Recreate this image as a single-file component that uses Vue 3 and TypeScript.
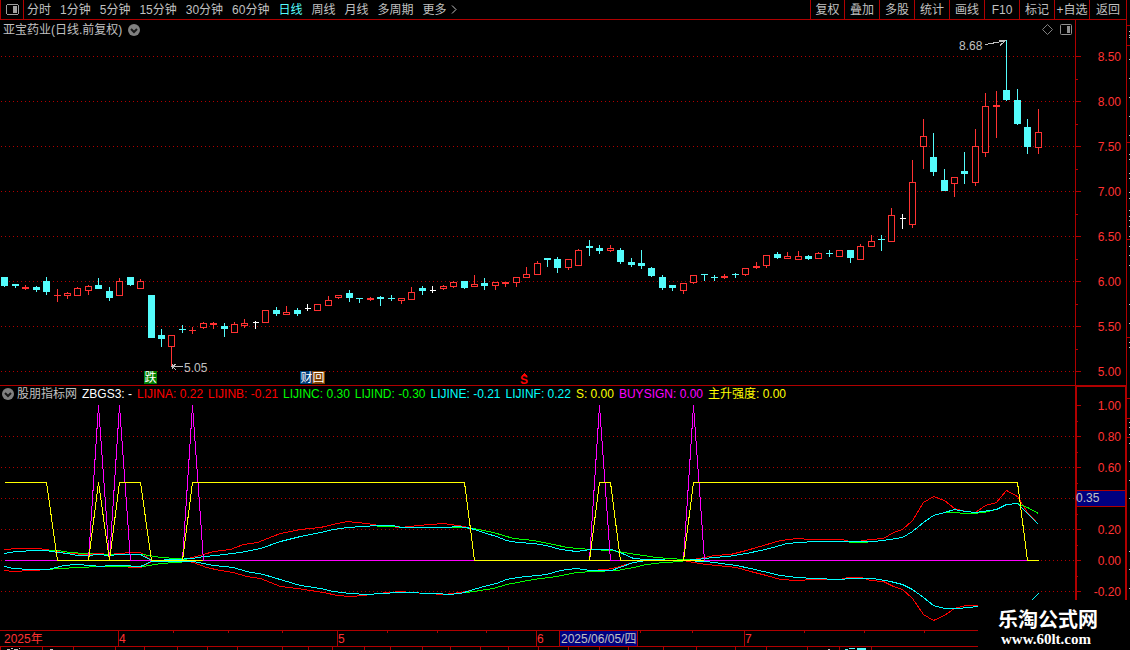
<script setup lang="ts">
type Kind = 'up' | 'down' | 'fill' | 'flat'
type Candle = [kind: string, high: number, top: number, bottom: number, low: number]
type Point = [number, number]

const periods = ['分时', '1分钟', '5分钟', '15分钟', '30分钟', '60分钟', '日线', '周线', '月线', '多周期']
const activePeriod = '日线'
const actions = ['复权', '叠加', '多股', '统计', '画线', 'F10', '标记', '+自选', '返回']

const chartWidth = 1075
const left = (x: number) => ({ left: (x / chartWidth) * 100 + '%' })
const slotX = (i: number) => Math.floor(4.94 + i * 10.435)

const kinds: Record<string, Kind> = { u: 'up', d: 'down', f: 'fill', w: 'flat' }
const candles: Candle[] = [
  ['d', 277, 277, 286, 287], ['d', 284, 284, 286, 288], ['f', 285, 287, 289, 290], ['d', 286, 287, 290, 292],
  ['d', 277, 281, 292, 295], ['f', 289, 295, 296, 302], ['u', 292, 293, 296, 299], ['u', 287, 288, 296, 296],
  ['u', 285, 286, 291, 295], ['d', 278, 285, 289, 289], ['d', 287, 291, 298, 301], ['u', 278, 281, 296, 296],
  ['d', 277, 277, 285, 286], ['u', 279, 281, 289, 289], ['d', 295, 295, 338, 338], ['d', 329, 335, 339, 347],
  ['u', 335, 335, 347, 366], ['d', 325, 329, 330, 333], ['f', 327, 330, 331, 334], ['u', 322, 323, 328, 329],
  ['f', 322, 323, 325, 329], ['d', 323, 326, 329, 337], ['u', 322, 324, 333, 333], ['u', 319, 323, 326, 328],
  ['w', 321, 322, 323, 329], ['u', 310, 310, 323, 323], ['d', 307, 310, 314, 316], ['u', 306, 312, 315, 315],
  ['d', 308, 310, 314, 316], ['w', 304, 308, 309, 311], ['u', 304, 304, 311, 311], ['u', 296, 300, 306, 306],
  ['u', 295, 295, 298, 299], ['d', 290, 293, 298, 302], ['d', 298, 298, 299, 303], ['f', 297, 298, 300, 301],
  ['d', 296, 297, 299, 306], ['d', 295, 298, 299, 301], ['u', 298, 298, 301, 304], ['u', 287, 292, 300, 300],
  ['d', 286, 288, 291, 295], ['w', 286, 290, 291, 293], ['u', 285, 286, 289, 290], ['u', 281, 282, 287, 288],
  ['d', 281, 281, 288, 289], ['u', 275, 284, 287, 287], ['d', 278, 283, 286, 290], ['u', 282, 282, 286, 290],
  ['f', 282, 282, 284, 287], ['u', 277, 277, 283, 287], ['u', 267, 274, 278, 278], ['u', 261, 263, 275, 275],
  ['d', 258, 258, 260, 267], ['d', 257, 259, 268, 273], ['u', 259, 259, 268, 270], ['u', 249, 250, 266, 266],
  ['d', 240, 246, 248, 256], ['d', 245, 248, 251, 254], ['u', 245, 248, 251, 252], ['d', 248, 250, 262, 264],
  ['d', 258, 262, 265, 267], ['d', 250, 263, 266, 269], ['d', 267, 268, 276, 277], ['d', 275, 277, 288, 290],
  ['d', 285, 285, 288, 291], ['u', 283, 283, 291, 294], ['u', 275, 275, 283, 284], ['d', 274, 274, 275, 281],
  ['d', 275, 277, 278, 281], ['f', 274, 276, 278, 279], ['d', 273, 274, 275, 278], ['u', 268, 268, 275, 276],
  ['f', 262, 266, 268, 269], ['u', 255, 255, 266, 268], ['d', 252, 254, 258, 259], ['u', 252, 256, 259, 259],
  ['u', 251, 256, 260, 260], ['d', 255, 256, 259, 260], ['u', 252, 253, 259, 259], ['d', 250, 253, 254, 257],
  ['u', 250, 250, 257, 257], ['d', 250, 250, 258, 263], ['u', 244, 246, 260, 260], ['u', 235, 241, 247, 247],
  ['d', 235, 239, 240, 251], ['u', 208, 215, 242, 242], ['w', 214, 218, 219, 229], ['u', 160, 182, 225, 228],
  ['u', 119, 136, 147, 169], ['d', 133, 157, 172, 176], ['d', 169, 180, 191, 191], ['u', 177, 177, 184, 197],
  ['d', 152, 171, 174, 184], ['u', 129, 146, 183, 186], ['u', 93, 106, 153, 157], ['f', 91, 105, 107, 138],
  ['d', 40, 90, 100, 101], ['d', 89, 100, 124, 125], ['d', 119, 127, 147, 154], ['u', 109, 132, 148, 154]
]
const bars = candles.map(([k, high, top, bottom, low], i) => ({
  x: slotX(i), kind: kinds[k], high, top, bottom, low
}))

const priceTicks = [8.5, 8, 7.5, 7, 6.5, 6, 5.5, 5].map((v, i) => ({ label: v.toFixed(2), y: 56 + i * 45 }))
const subTicks = [1, 0.8, 0.6, 0.4, 0.2, 0, -0.2].map((v, i) => ({ label: v.toFixed(2), y: 405 + i * 31 }))

const readings = [
  { text: 'ZBGS3: -', tone: 'white' },
  { text: 'LIJINA: 0.22', tone: 'red' },
  { text: 'LIJINB: -0.21', tone: 'red' },
  { text: 'LIJINC: 0.30', tone: 'green' },
  { text: 'LIJIND: -0.30', tone: 'green' },
  { text: 'LIJINE: -0.21', tone: 'cyan' },
  { text: 'LIJINF: 0.22', tone: 'cyan' },
  { text: 'S: 0.00', tone: 'yellow' },
  { text: 'BUYSIGN: 0.00', tone: 'magenta' },
  { text: '主升强度: 0.00', tone: 'yellow' }
]

const path = (pts: Point[]) => pts.map(([x, y]) => `${x + 0.5},${y + 0.5}`).join(' ')
const bySlot = (level: (i: number) => number): Point[] => bars.map((b, i) => [b.x, level(i)])

const buyDays = [9, 11, 18, 57, 66]
const strong = (i: number) =>
  i <= 4 || i === 9 || (i >= 11 && i <= 13) || (i >= 18 && i <= 44) || i === 57 || i === 58 || (i >= 66 && i <= 97)

const lines: { tone: string; pts: Point[] }[] = [
  { tone: 'red', pts: [[4, 549], [18, 548], [36, 548], [46, 549], [57, 551], [67, 553], [88, 554], [98, 553], [109, 554], [119, 553], [130, 552], [140, 552], [151, 560], [182, 559], [192, 557], [203, 554], [213, 551], [230, 549], [243, 544], [257, 542], [267, 538], [280, 533], [290, 531], [300, 529], [320, 527], [337, 523], [347, 521], [355, 522], [367, 523], [378, 525], [400, 527], [418, 525], [430, 524], [443, 523], [450, 524], [464, 526], [474, 529], [486, 533], [496, 536], [506, 540], [517, 542], [533, 543], [546, 545], [560, 549], [576, 551], [590, 549], [611, 549], [622, 553], [633, 558], [646, 559], [683, 560], [693, 559], [704, 557], [714, 555], [730, 554], [746, 550], [763, 545], [780, 540], [797, 538], [810, 539], [841, 539], [850, 541], [857, 541], [870, 539], [883, 538], [893, 532], [902, 529], [912, 520], [923, 502], [933, 496], [944, 500], [954, 508], [965, 511], [975, 512], [985, 505], [996, 502], [1006, 490], [1017, 496], [1027, 512], [1038, 524]] },
  { tone: 'red', pts: [[4, 570], [13, 571], [30, 570], [50, 569], [63, 565], [77, 564], [90, 565], [100, 566], [110, 565], [120, 565], [130, 567], [140, 567], [151, 561], [182, 560], [193, 562], [206, 567], [220, 570], [233, 572], [246, 576], [260, 578], [280, 586], [297, 588], [310, 590], [323, 592], [337, 595], [350, 596], [363, 595], [377, 593], [400, 591], [410, 592], [427, 593], [443, 594], [460, 592], [470, 590], [483, 586], [496, 583], [506, 579], [517, 577], [546, 574], [560, 570], [576, 568], [590, 570], [606, 569], [616, 567], [622, 565], [633, 562], [646, 560], [683, 560], [693, 562], [706, 564], [736, 567], [750, 571], [766, 575], [780, 579], [797, 580], [813, 579], [840, 579], [847, 577], [861, 577], [870, 580], [883, 581], [893, 586], [902, 589], [912, 598], [923, 614], [933, 620], [944, 615], [954, 608], [965, 605], [978, 605]] },
  { tone: 'green', pts: [[46, 550], [57, 550], [70, 552], [100, 554], [143, 554], [160, 557], [176, 558], [187, 559]] },
  { tone: 'green', pts: [[46, 569], [60, 568], [77, 567], [100, 566], [130, 566], [143, 566], [160, 563], [176, 562], [187, 561]] },
  { tone: 'green', pts: [[376, 526], [393, 526], [405, 527], [417, 527], [450, 527], [460, 527], [473, 528], [493, 532], [513, 538], [533, 540], [553, 544], [567, 547], [590, 549], [611, 550], [636, 554], [656, 557], [683, 559], [693, 559]] },
  { tone: 'green', pts: [[466, 592], [473, 591], [493, 588], [506, 584], [533, 579], [556, 576], [576, 572], [593, 571], [617, 570], [633, 567], [646, 564], [663, 562], [683, 561]] },
  { tone: 'green', pts: [[848, 542], [865, 542], [870, 541]] },
  { tone: 'green', pts: [[946, 512], [973, 513], [983, 512], [996, 509], [1006, 504], [1017, 503], [1027, 507], [1038, 513]] },
  { tone: 'cyan', pts: [[4, 553], [15, 551], [36, 550], [46, 550], [57, 552], [67, 553], [77, 555], [88, 555], [98, 554], [109, 555], [119, 554], [140, 554], [151, 560], [176, 559], [192, 558], [203, 556], [216, 555], [240, 552], [260, 548], [280, 541], [300, 536], [320, 532], [333, 529], [347, 527], [363, 526], [376, 525], [393, 525], [400, 527], [446, 527], [457, 526], [466, 527], [474, 529], [486, 533], [496, 536], [506, 540], [517, 542], [533, 543], [546, 545], [560, 549], [576, 551], [590, 549], [611, 549], [622, 553], [633, 558], [646, 559], [683, 560], [697, 559], [713, 557], [727, 556], [746, 553], [760, 550], [773, 547], [786, 543], [813, 541], [873, 541], [890, 539], [902, 537], [912, 531], [923, 522], [933, 515], [944, 512], [954, 509], [965, 511], [975, 512], [996, 509], [1006, 504], [1017, 503], [1027, 513], [1038, 524]] },
  { tone: 'cyan', pts: [[4, 566], [13, 568], [30, 569], [48, 569], [63, 565], [77, 564], [90, 565], [100, 566], [110, 565], [120, 565], [140, 566], [151, 561], [193, 561], [203, 563], [213, 565], [233, 567], [246, 571], [263, 574], [283, 580], [300, 585], [320, 588], [333, 591], [350, 593], [367, 594], [380, 593], [400, 592], [437, 593], [447, 594], [460, 593], [470, 590], [483, 586], [496, 583], [506, 579], [517, 577], [546, 574], [560, 570], [576, 568], [590, 570], [611, 570], [622, 566], [633, 562], [646, 560], [683, 560], [706, 561], [736, 565], [750, 568], [763, 571], [780, 575], [797, 577], [813, 578], [840, 579], [850, 578], [873, 578], [890, 581], [902, 584], [912, 589], [923, 597], [933, 605], [944, 608], [957, 608], [978, 606], [1006, 608], [1031, 600], [1038, 593]] },
  { tone: 'yellow', pts: bySlot(() => 560) },
  { tone: 'magenta', pts: bySlot((i) => (buyDays.includes(i) ? 405 : 560)) },
  { tone: 'yellow', pts: bySlot((i) => (strong(i) ? 482 : 560)) }
]

const months = [{ x: 118, label: '4' }, { x: 337, label: '5' }, { x: 536, label: '6' }, { x: 744, label: '7' }]
const weekTicks = [173, 228, 282, 387, 437, 486, 640, 692, 804, 864, 924]
const cells = [0, 42, 73, 115, 144, 177, 207, 237, 282, 308, 332, 364, 390, 422, 450, 480, 508, 538, 568, 599, 628, 663, 696, 735, 766, 807, 839, 871]
const edgeRules = [25, 45, 142, 239, 337, 398, 418, 437]
const edgeDots = [31, 35, 37, 59, 78, 97, 116, 135, 154, 159, 173, 178, 192, 198, 210, 216, 220, 226, 236, 246, 255, 265, 304, 323, 342, 347, 422, 427, 434, 443, 461, 480, 498, 551, 569, 588]
</script>

<template>
  <div class="app">
    <main class="terminal">
      <header class="toolbar">
        <button class="layout-btn" aria-label="布局">
          <svg width="13" height="11" shape-rendering="crispEdges">
            <path d="M1 .5H12M1 10.5H12M.5 1V10M12.5 1V10" stroke="#a0a0a0" />
            <rect x="7" y="2" width="4" height="7" fill="#a0a0a0" />
          </svg>
        </button>
        <nav class="periods">
          <button v-for="p in periods" :key="p" :class="{ active: p === activePeriod }">{{ p }}</button>
          <button class="more">更多
            <svg width="7" height="9"><path d="M1 .5L5 4.5L1 8.5" fill="none" stroke="#c0c0c0" /></svg>
          </button>
        </nav>
        <nav class="actions">
          <button v-for="a in actions" :key="a">{{ a }}</button>
        </nav>
      </header>

      <section class="panel">
        <div class="plot">
          <div class="title">
            <span>亚宝药业(日线.前复权)</span>
            <button class="round" aria-label="展开">
              <svg width="12" height="12"><circle cx="6" cy="6" r="6" fill="#808080" /><path d="M3 5L6 8L9 5" fill="none" stroke="#181818" stroke-width="2" /></svg>
            </button>
            <span class="tools">
              <button aria-label="标注"><svg width="11" height="11"><path d="M5.5 .5L10.5 5.5L5.5 10.5L.5 5.5Z" fill="none" stroke="#808080" /></svg></button>
              <button aria-label="侧栏"><svg width="12" height="11"><rect x=".5" y=".5" width="11" height="10" rx="1" fill="none" stroke="#909090" /><rect x="7" y="2" width="3" height="7" fill="#909090" /></svg></button>
            </span>
          </div>
          <div class="canvas">
            <svg class="price-chart" viewBox="0 38 1075 347" preserveAspectRatio="none" shape-rendering="crispEdges">
              <line v-for="t in priceTicks" :key="t.y" class="grid" x1="1" x2="1075" :y1="t.y + 0.5" :y2="t.y + 0.5" />
              <g v-for="b in bars" :key="b.x" :class="b.kind">
                <rect :x="b.x" :y="b.high" width="1" :height="b.top - b.high" />
                <rect :x="b.x" :y="b.bottom" width="1" :height="b.low - b.bottom" />
                <rect v-if="b.kind === 'up'" class="hollow" :x="b.x - 2.5" :y="b.top + 0.5" width="6" :height="b.bottom - b.top - 1" />
                <rect v-else :x="b.x - (b.kind === 'flat' ? 2 : 3)" :y="b.top" :width="b.kind === 'flat' ? 6 : 7" :height="b.bottom - b.top" />
              </g>
              <path class="pointer" d="M985 44.5L1005 41M999 40.5H1005.5L1000 45.5M183 366.5H172M176 364L172 366.5L176 370M172 364V369" />
            </svg>
            <span class="note high" :style="left(959)">8.68</span>
            <span class="note low" :style="left(184)">5.05</span>
            <span class="badge drop" :style="left(144)">跌</span>
            <span class="badge report" :style="left(300)">财</span>
            <span class="badge buyback" :style="left(312)">回</span>
            <span class="sell" :style="left(520)">
              <svg width="5" height="3" shape-rendering="crispEdges"><path d="M2 0H3V1H4V2H5V3H0V2H1V1H2Z" fill="#f00" /></svg>S
            </span>
          </div>
        </div>
        <svg class="axis" width="52" height="365" viewBox="1075 20 52 365" shape-rendering="crispEdges">
          <rect x="1075" y="20" width="1" height="365" />
          <rect x="1126" y="20" width="1" height="365" />
          <g v-for="(t, i) in priceTicks" :key="t.y">
            <rect x="1076" :y="t.y" width="5" height="1" />
            <rect v-if="i < 7" x="1076" :y="t.y + 23" width="2" height="1" />
            <text x="1121" :y="t.y + 5">{{ t.label }}</text>
          </g>
        </svg>
      </section>

      <section class="panel sub">
        <div class="plot">
          <div class="readings">
            <button class="round" aria-label="展开指标">
              <svg width="12" height="12"><circle cx="6" cy="6" r="6" fill="#808080" /><path d="M3 5L6 8L9 5" fill="none" stroke="#181818" stroke-width="2" /></svg>
            </button>
            <span class="source">股朋指标网</span>
            <span v-for="r in readings" :key="r.text" :class="r.tone">{{ r.text }}</span>
          </div>
          <svg class="sub-chart" viewBox="0 403 1075 227" preserveAspectRatio="none" shape-rendering="crispEdges">
            <line v-for="t in subTicks.slice(1)" :key="t.y" class="grid" x1="1" x2="1075" :y1="t.y + 0.5" :y2="t.y + 0.5" />
            <polyline v-for="(l, i) in lines" :key="i" :class="l.tone" :points="path(l.pts)" />
          </svg>
        </div>
        <svg class="axis" width="52" height="245" viewBox="1075 385 52 245" shape-rendering="crispEdges">
          <rect x="1075" y="385" width="2" height="245" />
          <rect x="1075" y="385" width="52" height="2" />
          <rect x="1125" y="385" width="2" height="245" />
          <g v-for="t in subTicks" :key="t.y">
            <rect x="1077" :y="t.y" width="4" height="1" />
            <rect x="1077" :y="t.y + 16" width="1" height="1" />
            <text v-if="t.label !== '0.40'" x="1121" :y="t.y + 5">{{ t.label }}</text>
          </g>
          <rect x="1077" y="490" width="48" height="17" />
          <rect class="cursor" x="1077" y="491" width="48" height="15" />
          <text class="cursor-value" x="1076" y="502">0.35</text>
        </svg>
      </section>

      <div class="dates">
        <div class="scale">
          <svg viewBox="0 631 1075 15" preserveAspectRatio="none" shape-rendering="crispEdges">
            <rect v-for="m in months" :key="m.x" :x="m.x" y="631" width="1" height="15" />
            <rect v-for="x in weekTicks" :key="x" :x="x" y="631" width="1" height="2" />
          </svg>
          <span :style="left(4)">2025年</span>
          <span v-for="m in months" :key="m.x" :style="left(m.x + 1)">{{ m.label }}</span>
          <span class="current" :style="left(559)">2025/06/05/四</span>
        </div>
      </div>

      <svg class="status" height="3" viewBox="0 647 1127 3" preserveAspectRatio="none" shape-rendering="crispEdges">
        <rect v-for="x in cells" :key="x" :x="x" y="647" width="1" height="3" />
        <path d="M7 649.5h3M11 648.5h2M14 649.5h4M19 648.5h1M50 649.5h3M828 649.5h2" stroke="#c0c0c0" />
        <path d="M845 649.5h3M849 648.5h6M857 648.5h9M857 649.5h9" stroke="#54fcfc" />
      </svg>
    </main>

    <svg class="edge" width="3" height="650" shape-rendering="crispEdges">
      <rect v-for="y in edgeRules" :key="y" x="0" :y="y" width="3" height="1" fill="#b00000" />
      <rect v-for="y in edgeDots" :key="y" x="2" :y="y" width="1" height="1" fill="#c0c0c0" />
    </svg>

    <aside class="brand">
      <strong>乐淘公式网</strong>
      <a href="#">www.60lt.com</a>
    </aside>
  </div>
</template>

<style>
body {
  background: #000;
}
</style>

<style scoped>
.app {
  position: relative;
  display: flex;
  background: #000;
  color: #c0c0c0;
  font: 12px/16px "Liberation Sans", "Noto Sans CJK SC", sans-serif;
  overflow: hidden;
  white-space: nowrap;
}
.terminal {
  flex: 1;
  min-width: 0;
}
svg {
  display: block;
}
button {
  margin: 0;
  padding: 0;
  border: 0;
  background: none;
  color: inherit;
  font: inherit;
}
.toolbar {
  display: flex;
  height: 19px;
  border-bottom: 1px solid #b00000;
  border-right: 1px solid #b00000;
}
.toolbar button {
  line-height: 18px;
}
.toolbar .layout-btn {
  display: grid;
  place-items: center;
  width: 24px;
  box-sizing: border-box;
  border-left: 1px solid #b00000;
  border-right: 1px solid #b00000;
}
.periods {
  display: flex;
  gap: 9px;
  padding-left: 3px;
}
.periods .active {
  color: #54fcfc;
}
.periods .more {
  display: flex;
  align-items: center;
  gap: 4px;
}
.actions {
  display: flex;
  margin-left: auto;
}
.actions button {
  width: 35px;
  box-sizing: border-box;
  border-left: 1px solid #b00000;
}
.actions button:first-child {
  width: 34px;
}
.actions button:last-child {
  width: 37px;
}
.panel {
  display: grid;
  grid-template-columns: minmax(0, 1fr) 52px;
}
.title {
  display: flex;
  align-items: center;
  gap: 6px;
  box-sizing: border-box;
  height: 18px;
  padding: 1px 3px 0;
}
.tools {
  display: flex;
  gap: 7px;
  margin-left: auto;
}
.canvas {
  position: relative;
}
.price-chart {
  width: 100%;
  height: 347px;
}
.sub-chart {
  width: 100%;
  height: 227px;
}
.grid {
  stroke: #b00000;
  stroke-dasharray: 1 3;
}
.up,
.fill {
  fill: #ff3232;
}
.down {
  fill: #54fcfc;
}
.flat {
  fill: #fff;
}
.hollow {
  fill: #000;
  stroke: #ff3232;
}
.pointer {
  fill: none;
  stroke: #c0c0c0;
}
.note,
.badge,
.sell {
  position: absolute;
}
.high {
  top: 0;
}
.low {
  bottom: 9px;
}
.badge {
  bottom: 1px;
  width: 13px;
  height: 13px;
  color: #fff;
  line-height: 14px;
  text-align: center;
}
.drop {
  background: #008000;
}
.report {
  background: #003c78;
}
.buyback {
  background: #804000;
}
.sell {
  bottom: 0;
  display: flex;
  flex-direction: column;
  align-items: center;
  color: #f00;
  font-weight: bold;
  line-height: 9px;
}
.axis {
  fill: #b00000;
}
.axis text {
  fill: #ff3232;
  text-anchor: end;
}
.axis .cursor {
  fill: #000080;
}
.axis .cursor-value {
  fill: #c0c0c0;
  text-anchor: start;
}
.sub .plot {
  border-top: 1px solid #b00000;
}
.readings {
  display: flex;
  align-items: center;
  gap: 5px;
  box-sizing: border-box;
  height: 17px;
  padding: 0 0 2px 2px;
}
.source {
  margin-left: -2px;
}
.white { color: #fff; }
.red { color: #f00; stroke: #f00; }
.green { color: #0f0; stroke: #0f0; }
.cyan { color: #0ff; stroke: #0ff; }
.yellow { color: #ff0; stroke: #ff0; }
.magenta { color: #f0f; stroke: #f0f; }
polyline {
  fill: none;
}
.dates {
  border-top: 1px solid #b00000;
  border-bottom: 1px solid #b00000;
  padding-right: 52px;
  color: #ff3232;
}
.scale {
  position: relative;
  height: 15px;
}
.scale svg {
  width: 100%;
  height: 15px;
  fill: #b00000;
}
.scale span {
  position: absolute;
  top: 0;
  padding-top: 1px;
  line-height: 14px;
}
.scale .current {
  padding: 1px 1px 0;
  border-left: 1px solid #b00000;
  border-right: 1px solid #b00000;
  background: #000080;
  color: #c0c0c0;
}
.status {
  width: 100%;
  fill: #b00000;
}
.brand {
  position: absolute;
  right: 0;
  bottom: 0;
  display: flex;
  flex-direction: column;
  width: 132px;
  height: 42px;
  padding: 8px 0 0 20px;
  background: #000;
  color: #fff;
}
.brand strong {
  font: bold 20px/22px "Noto Sans CJK SC", sans-serif;
}
.brand a {
  padding-left: 3px;
  color: #fff;
  font: bold 15px/18px "Liberation Serif", serif;
  text-decoration: none;
}
</style>
